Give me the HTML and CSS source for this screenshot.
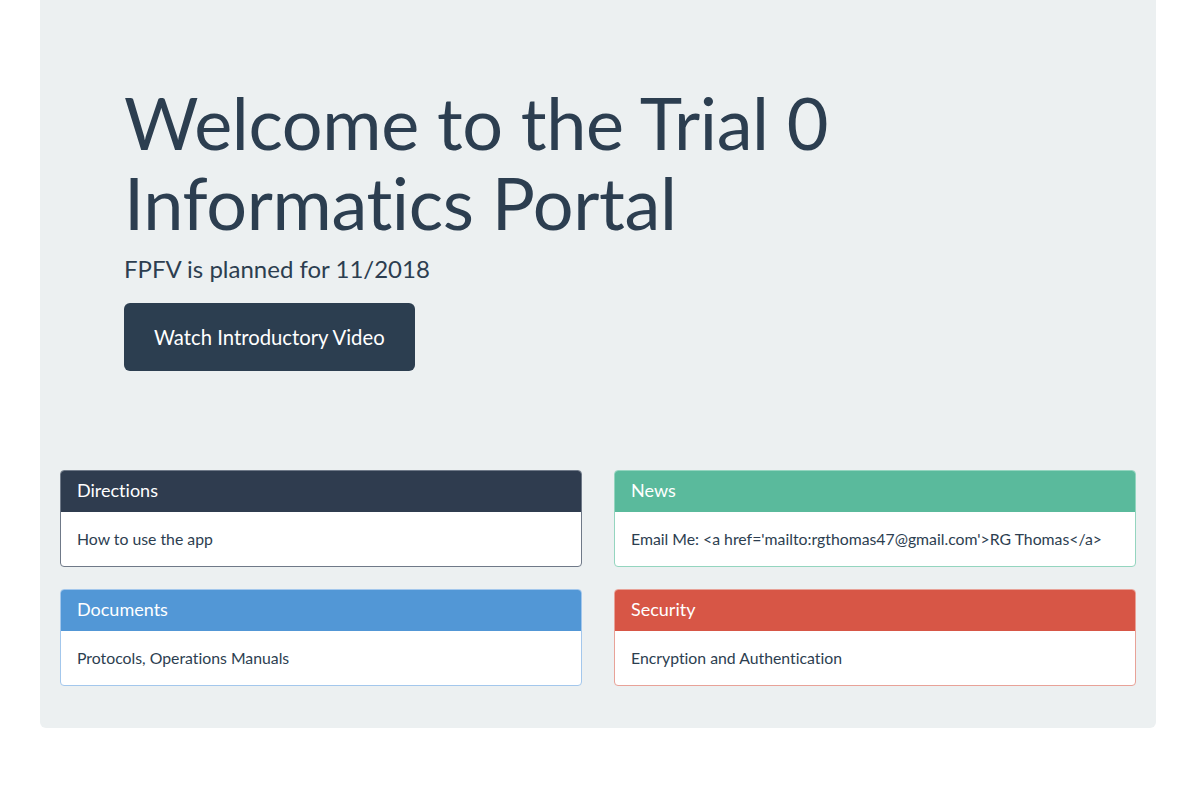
FILE: index.html
```html
<!DOCTYPE html>
<html lang="en">
<head>
<meta charset="utf-8">
<title>Trial 0 Informatics Portal</title>
<link rel="stylesheet" href="styles.css">
</head>
<body>
<div class="jumbotron">
  <div class="hero">
    <h1 class="title">Welcome to the Trial 0<br>Informatics Portal</h1>
    <p class="lead">FPFV is planned for 11/2018</p>
    <a class="btn" href="#">Watch Introductory Video</a>
  </div>
  <div class="panels">
    <div class="panel panel-dark">
      <div class="panel-heading">Directions</div>
      <div class="panel-body">How to use the app</div>
    </div>
    <div class="panel panel-green">
      <div class="panel-heading">News</div>
      <div class="panel-body">Email Me: &lt;a href='mailto:rgthomas47@gmail.com'&gt;RG Thomas&lt;/a&gt;</div>
    </div>
    <div class="panel panel-blue">
      <div class="panel-heading">Documents</div>
      <div class="panel-body">Protocols, Operations Manuals</div>
    </div>
    <div class="panel panel-red">
      <div class="panel-heading">Security</div>
      <div class="panel-body">Encryption and Authentication</div>
    </div>
  </div>
</div>
</body>
</html>
```
FILE: styles.css
```css
html, body {
  margin: 0;
  padding: 0;
  background: #ffffff;
}
body {
  font-family: Lato, "Open Sans", "Liberation Sans", sans-serif;
  color: #2c3e50;
  font-variant-ligatures: none;
}
.jumbotron {
  margin-left: 40px;
  width: 1116px;
  box-sizing: border-box;
  background: #ecf0f1;
  border-radius: 0 0 6px 6px;
  padding: 82px 20px 42px;
}
.hero {
  padding-left: 64px;
  margin-bottom: 99px;
}
.title {
  margin: 0;
  font-size: 72px;
  line-height: 80px;
  font-weight: 400;
  letter-spacing: -0.35px;
}
.lead {
  margin: 12px 0 19px;
  font-size: 24px;
  line-height: 30px;
}
.btn {
  display: inline-block;
  background: #2c3e50;
  color: #ffffff;
  text-decoration: none;
  font-size: 20.3px;
  line-height: 28px;
  padding: 20px 30px;
  border-radius: 6px;
}
.panels {
  display: grid;
  grid-template-columns: 1fr 1fr;
  column-gap: 32px;
  row-gap: 22px;
}
.panel {
  border: 1px solid;
  border-radius: 4px;
  background: #ffffff;
  overflow: hidden;
}
.panel-heading {
  height: 41px;
  box-sizing: border-box;
  padding: 7px 16px 9px;
  font-size: 18px;
  line-height: 25px;
  color: #ffffff;
}
.panel-body {
  height: 54px;
  box-sizing: border-box;
  padding: 16px 16px;
  font-size: 15.8px;
  line-height: 22px;
}
.panel-dark { border-color: #6f7988; }
.panel-dark .panel-heading { background: #2f3c4f; }
.panel-green { border-color: #94d5bf; }
.panel-green .panel-heading { background: #5aba9c; }
.panel-blue { border-color: #a3c7ec; }
.panel-blue .panel-heading { background: #5297d6; }
.panel-red { border-color: #e8a298; }
.panel-red .panel-heading { background: #d75646; }
```
